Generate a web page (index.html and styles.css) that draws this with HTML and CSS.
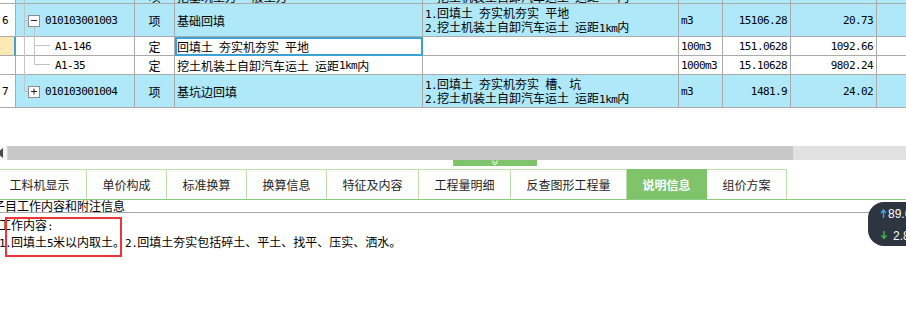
FILE: index.html
```html
<!DOCTYPE html>
<html lang="zh-CN">
<head>
<meta charset="utf-8">
<title>说明信息</title>
<link rel="stylesheet" href="styles.css">
</head>
<body>
<div class="page">
  <div class="grid">
    <div class="row r-top">
      <div class="c no"></div>
      <div class="c code"></div>
      <div class="c typ">项</div>
      <div class="c desc">挖基坑土方 一般土方</div>
      <div class="c feat"><span class="a">2.</span>挖土机装土自卸汽车运土<span class="a"> </span>运距<span class="a">1km</span>内</div>
      <div class="c unit"></div>
      <div class="c qty"></div>
      <div class="c price"></div>
      <div class="c last"></div>
    </div>
    <div class="row item">
      <div class="c no"><span class="a">6</span></div>
      <div class="c code"><svg class="box" width="12" height="12" viewBox="0 0 12 12"><rect x="0.5" y="0.5" width="11" height="11" fill="#fff" stroke="#8c8c8c"/><path d="M3 5.5H9" stroke="#222" fill="none"/></svg><span class="a">010103001003</span></div>
      <div class="c typ">项</div>
      <div class="c desc">基础回填</div>
      <div class="c feat"><div class="lines"><div><span class="a">1.</span>回填土<span class="a"> </span>夯实机夯实<span class="a"> </span>平地</div><div><span class="a">2.</span>挖土机装土自卸汽车运土<span class="a"> </span>运距<span class="a">1km</span>内</div></div></div>
      <div class="c unit"><span class="a">m3</span></div>
      <div class="c qty"><span class="a">15106.28</span></div>
      <div class="c price"><span class="a">20.73</span></div>
      <div class="c last"></div>
    </div>
    <div class="row sub">
      <div class="c no cur"></div>
      <div class="c code leaf"><span class="a">A1-146</span></div>
      <div class="c typ">定</div>
      <div class="c desc sel">回填土<span class="a"> </span>夯实机夯实<span class="a"> </span>平地</div>
      <div class="c feat"></div>
      <div class="c unit"><span class="a">100m3</span></div>
      <div class="c qty"><span class="a">151.0628</span></div>
      <div class="c price"><span class="a">1092.66</span></div>
      <div class="c last"></div>
    </div>
    <div class="row sub">
      <div class="c no"></div>
      <div class="c code leaf"><span class="a">A1-35</span></div>
      <div class="c typ">定</div>
      <div class="c desc">挖土机装土自卸汽车运土<span class="a"> </span>运距<span class="a">1km</span>内</div>
      <div class="c feat"></div>
      <div class="c unit"><span class="a">1000m3</span></div>
      <div class="c qty"><span class="a">15.10628</span></div>
      <div class="c price"><span class="a">9802.24</span></div>
      <div class="c last"></div>
    </div>
    <div class="row item">
      <div class="c no"><span class="a">7</span></div>
      <div class="c code"><svg class="box" width="12" height="12" viewBox="0 0 12 12"><rect x="0.5" y="0.5" width="11" height="11" fill="#fff" stroke="#8c8c8c"/><path d="M3 5.5H9M6 2.5V8.5" stroke="#222" fill="none"/></svg><span class="a">010103001004</span></div>
      <div class="c typ">项</div>
      <div class="c desc">基坑边回填</div>
      <div class="c feat"><div class="lines"><div><span class="a">1.</span>回填土<span class="a"> </span>夯实机夯实<span class="a"> </span>槽、坑</div><div><span class="a">2.</span>挖土机装土自卸汽车运土<span class="a"> </span>运距<span class="a">1km</span>内</div></div></div>
      <div class="c unit"><span class="a">m3</span></div>
      <div class="c qty"><span class="a">1481.9</span></div>
      <div class="c price"><span class="a">24.02</span></div>
      <div class="c last"></div>
    </div>
    <svg class="tree" width="60" height="108" viewBox="0 0 60 108">
      <path d="M24.5 0V91.5H28M24.5 20.5H28M34.5 27V64.5H50M34.5 45.5H50" stroke="#c4c4c4" fill="none"/>
    </svg>
  </div>

  <div class="blank"></div>

  <div class="hscroll">
    <div class="sbtn"><span class="tri"></span></div>
    <div class="thumb"></div>
  </div>

  <div class="handle">
    <svg width="10" height="6" viewBox="0 0 10 6"><path d="M2 0.5L5 3L8 0.5M2 2.5L5 5L8 2.5" stroke="#fff" stroke-width="1" fill="none" opacity="0.9"/></svg>
  </div>

  <div class="tabs">
    <div class="tab first">工料机显示</div>
    <div class="tab">单价构成</div>
    <div class="tab">标准换算</div>
    <div class="tab">换算信息</div>
    <div class="tab w92">特征及内容</div>
    <div class="tab w92">工程量明细</div>
    <div class="tab w116">反查图形工程量</div>
    <div class="tab active">说明信息</div>
    <div class="tab">组价方案</div>
  </div>

  <div class="title">子目工作内容和附注信息</div>

  <div class="content">
    <p>工作内容<span class="a">:</span></p>
    <p><span class="a">1.</span>回填土<span class="a">5</span>米以内取土。<span class="a">2.</span>回填土夯实包括碎土、平土、找平、压实、洒水。</p>
  </div>

  <div class="mark"></div>

  <div class="pill">
    <div class="pl"><svg width="7" height="9" viewBox="0 0 7 9"><path d="M3.5 9V1.5M1 4L3.5 1L6 4" stroke="#3fa9f5" stroke-width="1.4" fill="none"/></svg><span>89.6</span></div>
    <div class="pl dn"><svg width="8" height="9" viewBox="0 0 8 9"><path d="M4 0V5" stroke="#36b24a" stroke-width="1.6"/><path d="M0.5 4.5H7.5L4 8.5Z" fill="#36b24a"/></svg><span>2.8</span></div>
  </div>
</div>
</body>
</html>
```

FILE: styles.css
```css
* {
  box-sizing: border-box;
  margin: 0;
  padding: 0;
}

html, body {
  width: 906px;
  height: 313px;
  overflow: hidden;
  background: #fff;
}

body {
  font-family: "Noto Sans CJK SC", "Noto Sans", sans-serif;
  font-size: 12px;
  color: #000;
}

.page {
  position: relative;
  width: 906px;
  height: 313px;
  overflow: hidden;
}

/* ---------- grid ---------- */
.grid {
  position: relative;
}

.row {
  display: grid;
  grid-template-columns: 16px 119px 40px 248px 256px 44px 68px 86px 1fr;
}

.c {
  display: flex;
  align-items: center;
  padding-top: 2px;
  border-right: 1px solid #ababab;
  border-bottom: 1px solid #ababab;
  line-height: 12px;
  white-space: nowrap;
  overflow: hidden;
}

.a {
  font-family: "DejaVu Sans Mono", "Liberation Mono", monospace;
  font-size: 11px;
  letter-spacing: -0.6px;
  white-space: pre;
}

.r-top { height: 4px; }
.r-top .c {
  padding-top: 0;
  align-items: flex-end;
}

.item { height: 33px; }
.sub { height: 19px; }

.r-top .c,
.item .c { background: #afe8f9; }

.sub .c { background: #fff; }

.c.no {
  background: #fff;
  padding-left: 2px;
}

.c.no.cur {
  background: #fde9b4;
  border-right: 2px solid #3ba2d4;
}

.code {
  padding-left: 12px;
  gap: 5px;
}

.code.leaf { padding-left: 39px; }

.typ { justify-content: center; }

.desc,
.feat,
.unit { padding-left: 2px; }

.qty,
.price {
  justify-content: flex-end;
  padding-right: 3px;
}

.last { border-right: none; }

.sel {
  outline: 2px solid #3ba2d4;
  outline-offset: -2px;
}

.lines { line-height: 12px; }

.box { flex: none; }

.tree {
  position: absolute;
  left: 0;
  top: 0;
  pointer-events: none;
}

/* ---------- scroll & splitter ---------- */
.blank { height: 38px; }

.hscroll {
  display: flex;
  height: 14px;
  background: #e1e1e1;
}

.sbtn {
  width: 8px;
  background: #f6f6f6;
  border-right: 1px solid #d6d6d6;
  display: flex;
  align-items: center;
}

.tri {
  display: block;
  width: 0;
  height: 0;
  margin-left: -3px;
  border-top: 5px solid transparent;
  border-bottom: 5px solid transparent;
  border-right: 6px solid #4a4a4a;
}

.thumb {
  width: 785px;
  background: #c8c8c8;
}

.handle {
  width: 84px;
  height: 6px;
  margin-left: 453px;
  background: #7fc36b;
  display: flex;
  justify-content: center;
}

/* ---------- tabs ---------- */
.tabs {
  display: flex;
  height: 31px;
  margin-top: 3px;
  border-bottom: 1px solid #8fcb7d;
}

.tab {
  width: 80px;
  display: flex;
  align-items: center;
  justify-content: center;
  border-top: 1px solid #bde0ae;
  border-right: 1px solid #bde0ae;
  color: #1e1e1e;
  line-height: 12px;
}

.tab.first {
  width: 94px;
  margin-left: -7px;
}

.tab.w92 { width: 92px; }
.tab.w116 { width: 116px; }

.tab.active {
  background: #7fc36b;
  border-color: #7fc36b;
  color: #fff;
  font-weight: 700;
}

/* ---------- notes ---------- */
.title {
  height: 13px;
  line-height: 12px;
  margin-left: -7px;
  border-bottom: 1px solid #a9a9a9;
  white-space: nowrap;
}

.content {
  padding-top: 4px;
  margin-left: -1px;
  line-height: 15px;
  white-space: nowrap;
}

.mark {
  position: absolute;
  left: 5px;
  top: 217px;
  width: 117px;
  height: 40px;
  border: 2px solid #ee3339;
}

.pill {
  position: absolute;
  left: 868px;
  top: 202px;
  width: 60px;
  height: 44px;
  border-radius: 16px;
  background: #2c3540;
  color: #fff;
  font-family: "Liberation Sans", Arial, sans-serif;
  font-size: 12px;
  padding-top: 5px;
  padding-left: 12px;
}

.pl {
  display: flex;
  align-items: center;
  gap: 1px;
  height: 13px;
}

.pl.dn {
  margin-top: 9px;
  gap: 5px;
}
```
